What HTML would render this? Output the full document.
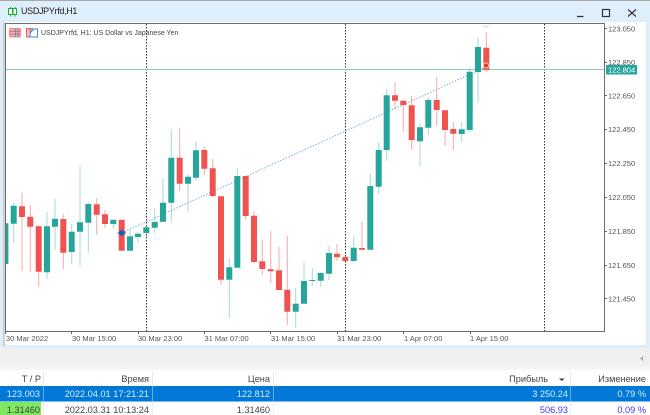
<!DOCTYPE html>
<html><head><meta charset="utf-8">
<style>
html,body{margin:0;padding:0;background:#fff}
#w{position:relative;width:650px;height:415px;overflow:hidden;background:#fff;font-family:"Liberation Sans",sans-serif}
.a{position:absolute}
.t{position:absolute;white-space:nowrap;font-size:9.2px;line-height:13px;color:#444;text-align:right}
</style></head><body>
<div id="w">
<div class="a" style="left:0;top:0;width:650px;height:348px;background:#dfeefb"></div>
<div class="a" style="left:0;top:0;width:650px;height:1px;background:#a9a9a9"></div>
<div class="a" style="left:4px;top:22px;width:642px;height:323px;background:#fff"></div>
<div class="a" style="left:0;top:348px;width:650px;height:19px;background:#f0f0f0"></div>
<div class="a" style="left:0;top:367px;width:650px;height:3px;background:#f6f6f6"></div>
<div class="a" style="left:21px;top:4px;font-size:9px;letter-spacing:-.33px;line-height:14px;color:#222;white-space:nowrap">USDJPYrfd,H1</div>
<svg class="a" style="left:0;top:0" width="650" height="415" viewBox="0 0 650 415" fill="none">
<path d="M10.500 7V16.500M15 7V16.500" stroke="#16b52e"/>
<rect x="8.500" y="8.500" width="4" height="6" fill="#fff" stroke="#16b52e"/>
<rect x="13" y="8.500" width="3.500" height="6" fill="#fff" stroke="#16b52e"/>
<path d="M577 16.500H583.500" stroke="#333" stroke-width="1.300"/>
<rect x="602.500" y="9.500" width="7" height="7" stroke="#333" stroke-width="1.200"/>
<path d="M628 9.500L636 16.500M636 9.500L628 16.500" stroke="#333" stroke-width="1.200"/>
<path d="M4 22V346" stroke="#aaa"/>
<path d="M5.500 331.500V23.500H604.500V331.500H5.500" stroke="#6e6e6e"/>
<path d="M146.500 24V331M345.500 24V331M544.500 24V331" stroke="#333" stroke-dasharray="1.500 1.500"/>
<path d="M6 69.500H604" stroke="#8fc9c1"/>
<path d="M121.700 233L486 67" stroke="#4f8fd0" stroke-dasharray="1.500 1.500" opacity=".75"/>
<path d="M604 28.500h3M604 62.500h3M604 95.500h3M604 129.500h3M604 163.500h3M604 197.500h3M604 231.500h3M604 265.500h3M604 298.500h3" stroke="#666"/>
<path d="M5.500 331v3M71.500 331v3M138.500 331v3M204.500 331v3M270.500 331v3M337.500 331v3M403.500 331v3M470.500 331v3" stroke="#666"/>
<rect x="9.500" y="28.500" width="11" height="8.500" rx="1" fill="#f9aaa6" stroke="#f08a86"/>
<path d="M10 31.300h10M10 34.200h10" stroke="#e8605c" stroke-width=".8"/>
<path d="M15.500 28.500v8.500M18 28.500v8.500" stroke="#4a93d6" stroke-width=".9"/>
<path d="M26.500 28.500h3.500v8.500h-3.500z" fill="#f9c4c0" stroke="#e65a5a"/>
<path d="M30 33l4-4h3.500v8h-7.500z" fill="#fff" stroke="#2f8ad8"/>
<rect x="30.500" y="28" width="3.500" height="3" fill="#9aa8b4"/>
<path d="M481 25h10l-5 4z" fill="#eee"/>
<g clip-path="url(#c)">
<defs><clipPath id="c"><rect x="6" y="24" width="598" height="307"/></clipPath></defs>
<path stroke="#26a69a" stroke-opacity=".42" d="M13.700 203V243M47 212V278.700M55 199V250M71.700 224V264M80 165.300V266.700M88.300 201.700V252.700M113.300 219.700V229.300M130 229.700V250.700M138 232V242.700M146.300 227.300V238M154.700 208.300V232.700M163 178.300V221.700M171.300 129V222.700M188 174V212M196 141V181M229.300 258.300V318M237.300 168.300V267M295.700 288V328.300M304 261.300V303M312.300 268.300V286.300M320.700 271.700V286.700M329 245.700V280M353.700 236V261M370.300 173.300V249M378.700 142.300V194M386.700 89V160.700M420 123.300V166M428.300 97.300V134.700M461.700 122V142M469.700 68.300V132M478 37.700V102.700"/>
<path stroke="#ef5350" stroke-opacity=".5" d="M22 192.700V270.700M30.300 205V272M38.700 225V286.700M63.300 214.300V269M96.700 198.300V234.700M105 210V227.700M179.700 128V191M204.300 146.700V175M212.700 159V196.700M221 196V285M245.700 176V220M254 211V262.700M262.300 239.300V275M270.700 231V283.300M279 246.700V290M287.300 236V324.700M337 244V260.700M345.300 253V261M362 221.700V250.300M395 82.300V109.300M403.300 100V131.700M411.700 96V150M436.700 77.300V125.700M445 110V146M453.300 122V150M486.300 31.700V72"/>
<path stroke="#26a69a" stroke-width="6" d="M5.400 223.300V264M13.700 205.700V223.700M47 226.300V272.300M55 218.700V226.700M71.700 231.700V252M80 222.300V231.700M88.300 204V222.700M113.300 219.700V224M130 236.300V250.700M138 233.700V237M146.300 227.300V233M154.700 222V227.700M163 202.700V221.700M171.300 157.700V202.700M188 176.700V183.700M196 150.300V177.700M229.300 267.300V279.700M237.300 176V267.700M295.700 303.700V311.700M304 281V303.700M312.300 280V281M320.700 273V280.700M329 253V273.700M353.700 247.700V261M370.300 186V249.700M378.700 150V186.700M386.700 95.300V150M420 127.300V141.300M428.300 100V127.700M461.700 129.300V134M469.700 71.700V130M478 47V72"/>
<path stroke="#ef5350" stroke-width="6" d="M22 206.300V217M30.300 216.700V226.700M38.700 226.300V271.700M63.300 219V252.700M96.700 204.300V214.700M105 214.300V224M121.700 219.700V250.700M179.700 157.700V183.700M204.300 150V168.700M212.700 168.300V196M221 196.300V279.700M245.700 176V216M254 215.700V262M262.300 261.300V269M270.700 269.300V271.300M279 270.300V290M287.300 289.700V311.700M337 253.700V257.300M345.300 257V261M362 248V249.700M395 95.300V100.700M403.300 100.700V105M411.700 105.300V140M436.700 100V110M445 110.300V130M453.300 129V133.700M486.300 47.700V70"/>
</g>
<circle cx="121.700" cy="233" r="2.800" fill="#1a5fb4"/>
<path d="M117.500 233H126" stroke="#1a5fb4"/>
<circle cx="486" cy="65.500" r="2.600" fill="#d9391f" stroke="#ffc9b8"/>
<rect x="606" y="65" width="31" height="9.500" fill="#26a69a"/>
<rect x="0" y="386" width="650" height="15.500" fill="#0078d7"/>
<rect x="0" y="402" width="41" height="13" fill="#7fe85f"/>
<path d="M43.500 372V386M152.500 372V386M273.500 372V386M570.500 372V386" stroke="#e8e8e8"/>
<path d="M43.500 386V401M152.500 386V401M273.500 386V401M570.500 386V401" stroke="#6aaae6"/>
<path d="M43.500 402V415M152.500 402V415M273.500 402V415M570.500 402V415" stroke="#eee"/>
<path d="M559 378.500h5.500l-2.750 2.500z" fill="#333"/>
<path d="M640 358.500l3-2.500v5z" fill="#aaa"/>
<g font-family="Liberation Sans,sans-serif" font-size="7.500" fill="#555">
<text x="608" y="31.500">123.050</text>
<text x="608" y="65">122.850</text>
<text x="608" y="98.500">122.650</text>
<text x="608" y="132">122.450</text>
<text x="608" y="166">122.250</text>
<text x="608" y="200">122.050</text>
<text x="608" y="234">121.850</text>
<text x="608" y="268">121.650</text>
<text x="608" y="301.500">121.450</text>
<text x="608" y="72.500" fill="#fff">122.804</text>
<text x="6" y="341">30 Mar 2022</text>
<text x="72" y="341">30 Mar 15:00</text>
<text x="138" y="341">30 Mar 23:00</text>
<text x="204.500" y="341">31 Mar 07:00</text>
<text x="271" y="341">31 Mar 15:00</text>
<text x="337" y="341">31 Mar 23:00</text>
<text x="404" y="341">1 Apr 07:00</text>
<text x="470" y="341">1 Apr 15:00</text>
<text x="41" y="35" font-size="7" fill="#444">USDJPYrfd, H1:  US Dollar vs Japanese Yen</text>
</g>
</svg>
<div class="t" style="right:609px;top:373px">T / P</div>
<div class="t" style="right:501px;top:373px">Время</div>
<div class="t" style="right:380px;top:373px">Цена</div>
<div class="t" style="right:102px;top:373px">Прибыль</div>
<div class="t" style="right:4px;top:373px">Изменение</div>
<div class="t" style="right:610px;top:388px;color:#dcebfa">123.003</div>
<div class="t" style="right:501px;top:388px;color:#dcebfa">2022.04.01 17:21:21</div>
<div class="t" style="right:380px;top:388px;color:#dcebfa">122.812</div>
<div class="t" style="right:82px;top:388px;color:#dcebfa">3 250.24</div>
<div class="t" style="right:4px;top:388px;color:#dcebfa">0.79 %</div>
<div class="t" style="right:610px;top:404px">1.31460</div>
<div class="t" style="right:501px;top:404px">2022.03.31 10:13:24</div>
<div class="t" style="right:380px;top:404px">1.31460</div>
<div class="t" style="right:82px;top:404px;color:#3a3aff">506.93</div>
<div class="t" style="right:4px;top:404px;color:#3a3aff">0.09 %</div>
</div>
</body></html>
